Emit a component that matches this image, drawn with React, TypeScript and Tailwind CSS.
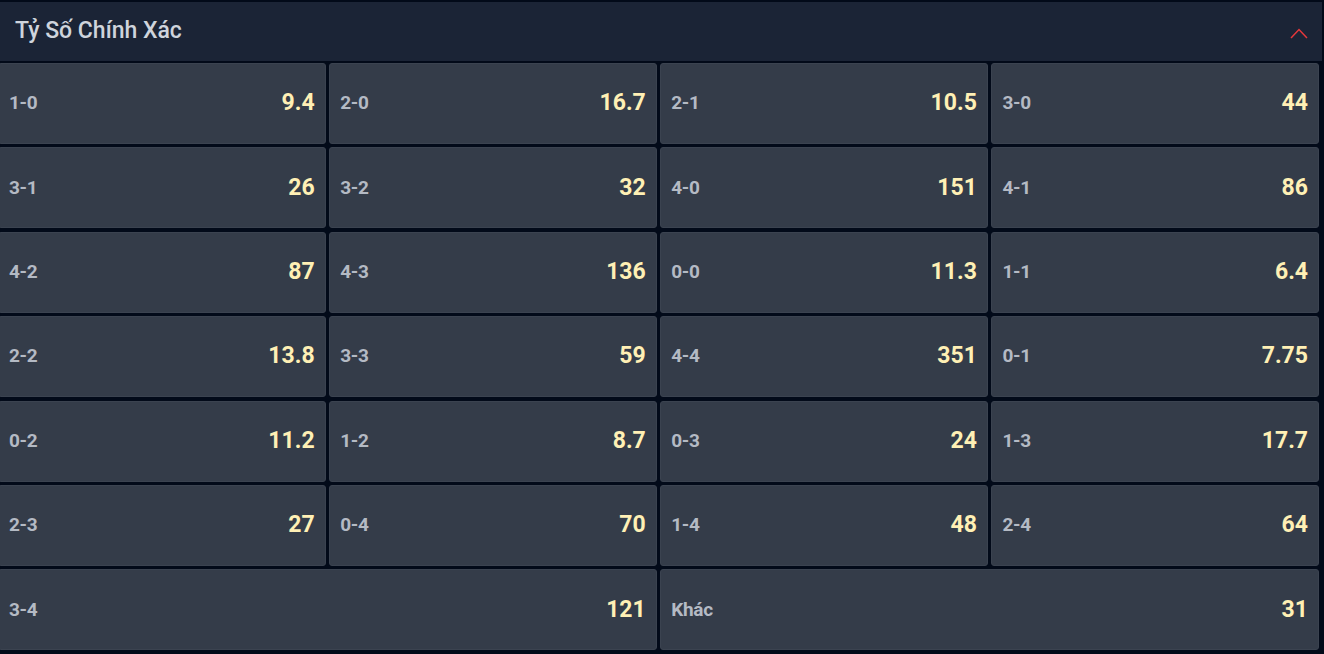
const scores: [string, string][] = [
  ['1-0', '9.4'], ['2-0', '16.7'], ['2-1', '10.5'], ['3-0', '44'],
  ['3-1', '26'], ['3-2', '32'], ['4-0', '151'], ['4-1', '86'],
  ['4-2', '87'], ['4-3', '136'], ['0-0', '11.3'], ['1-1', '6.4'],
  ['2-2', '13.8'], ['3-3', '59'], ['4-4', '351'], ['0-1', '7.75'],
  ['0-2', '11.2'], ['1-2', '8.7'], ['0-3', '24'], ['1-3', '17.7'],
  ['2-3', '27'], ['0-4', '70'], ['1-4', '48'], ['2-4', '64'],
]

function OddCell({ label, price, wide }: { label: string; price: string; wide?: boolean }) {
  return (
    <button
      type="button"
      className={
        'flex h-[81px] items-center justify-between rounded-[3px] border border-[#3b4350] bg-[#343c49] pl-[10px] pr-[10px] ' +
        (wide ? 'col-span-2' : '')
      }
    >
      <span className="text-[19px] font-bold tracking-[-0.3px] text-[#b4bac4]">{label}</span>
      <span className="text-[23px] font-bold text-[#fff0b5]">{price}</span>
    </button>
  )
}

export default function App() {
  return (
    <div className="h-[654px] w-[1324px] overflow-hidden bg-[#020a19] pt-[2px] font-['Roboto',sans-serif]">
      <header className="flex h-[59px] w-[1322px] items-center justify-between bg-[#1b2436] pl-[15px] pr-[14px]">
        <h2 className="text-[23px] font-medium text-[#cfd4dc]">Tỷ Số Chính Xác</h2>
        <svg width="18" height="11" viewBox="0 0 18 11" fill="none" className="mt-[3px]">
          <polyline points="1,10 9,1.5 17,10" stroke="#e5383b" strokeWidth="1.5" />
        </svg>
      </header>
      <div className="ml-[-2px] mt-[2px] grid w-[1321px] grid-cols-4 gap-x-[3.5px] gap-y-[3.4px]">
        {scores.map(([label, price]) => (
          <OddCell key={label} label={label} price={price} />
        ))}
        <OddCell label="3-4" price="121" wide />
        <OddCell label="Khác" price="31" wide />
      </div>
    </div>
  )
}
